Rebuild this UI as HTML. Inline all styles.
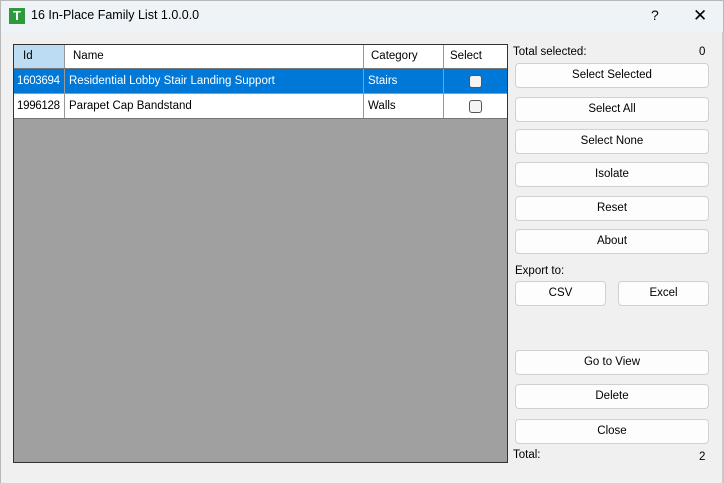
<!DOCTYPE html><html><head><style>
body{margin:0;width:724px;height:483px;background:#f0f0f0;font-family:"Liberation Sans",sans-serif;font-size:11.5px;position:relative;overflow:hidden;color:#000}
.abs{position:absolute}
.title{left:0;top:0;width:722px;height:32px;background:#eef3f8;border:1px solid #b8b8b8;border-bottom:none}
.btn{position:absolute;left:515px;width:192px;height:23px;border:1px solid #d0d0d0;border-radius:4px;background:#fdfdfd;text-align:center;line-height:23px}
.grid{left:13px;top:44px;width:493px;height:417px;border:1px solid #333;background:#a0a0a0}
.row{position:absolute;left:0;width:493px;height:24px;background:#fff;border-bottom:1px solid #999}
.c{position:absolute;top:0;height:100%;line-height:24px;border-right:1px solid #999;box-sizing:border-box;padding-left:4px;white-space:nowrap;overflow:hidden}
.cb{position:absolute;left:25px;top:6px;width:11px;height:11px;border:1px solid #555;border-radius:3px;background:#f4f4f4}
</style></head><body>
<div class="abs title"></div>
<div class="abs" style="left:9px;top:8px;width:16px;height:16px;background:#2e9a3c;color:#fff;font-weight:bold;font-size:13px;line-height:16px;text-align:center">T</div>
<div class="abs" style="left:31px;top:8px;font-size:12.5px">16 In-Place Family List 1.0.0.0</div>
<div class="abs" style="left:651px;top:7px;font-size:14px">?</div>
<div class="abs" style="left:693px;top:6px;font-size:17px;font-weight:300">✕</div>
<div class="abs" style="left:0;top:32px;width:1px;height:451px;background:#b8b8b8"></div>
<div class="abs" style="left:722px;top:32px;width:2px;height:451px;background:#c8c8c8"></div>
<div class="abs grid">
 <div class="row" style="top:0;height:23px;border-bottom:1px solid #777">
  <div class="c" style="left:0;width:51px;background:#bcdcf4;padding-left:9px;line-height:23px">Id</div>
  <div class="c" style="left:51px;width:299px;padding-left:8px;line-height:23px">Name</div>
  <div class="c" style="left:350px;width:80px;padding-left:7px;line-height:23px">Category</div>
  <div class="c" style="left:430px;width:63px;padding-left:6px;line-height:23px;border-right:none">Select</div>
 </div>
 <div class="row" style="top:24px;background:#0078d7;color:#fff">
  <div class="c" style="left:0;width:51px;padding-left:3px;letter-spacing:-0.3px">1603694</div>
  <div class="c" style="left:51px;width:299px">Residential Lobby Stair Landing Support</div>
  <div class="c" style="left:350px;width:80px">Stairs</div>
  <div class="c" style="left:430px;width:63px;border-right:none"><div class="cb"></div></div>
 </div>
 <div class="row" style="top:49px;border-bottom:1px solid #777">
  <div class="c" style="left:0;width:51px;padding-left:3px;letter-spacing:-0.3px">1996128</div>
  <div class="c" style="left:51px;width:299px">Parapet Cap Bandstand</div>
  <div class="c" style="left:350px;width:80px">Walls</div>
  <div class="c" style="left:430px;width:63px;border-right:none"><div class="cb"></div></div>
 </div>
</div>
<div class="abs" style="left:513px;top:46px">Total selected:</div>
<div class="abs" style="left:699px;top:46px">0</div>
<div class="btn" style="top:63px">Select Selected</div>
<div class="btn" style="top:97px">Select All</div>
<div class="btn" style="top:129px">Select None</div>
<div class="btn" style="top:162px">Isolate</div>
<div class="btn" style="top:196px">Reset</div>
<div class="btn" style="top:229px">About</div>
<div class="abs" style="left:515px;top:265px">Export to:</div>
<div class="btn" style="top:281px;width:89px">CSV</div>
<div class="btn" style="top:281px;left:618px;width:89px">Excel</div>
<div class="btn" style="top:350px">Go to View</div>
<div class="btn" style="top:384px">Delete</div>
<div class="btn" style="top:419px">Close</div>
<div class="abs" style="left:513px;top:449px">Total:</div>
<div class="abs" style="left:699px;top:451px">2</div>
</body></html>
